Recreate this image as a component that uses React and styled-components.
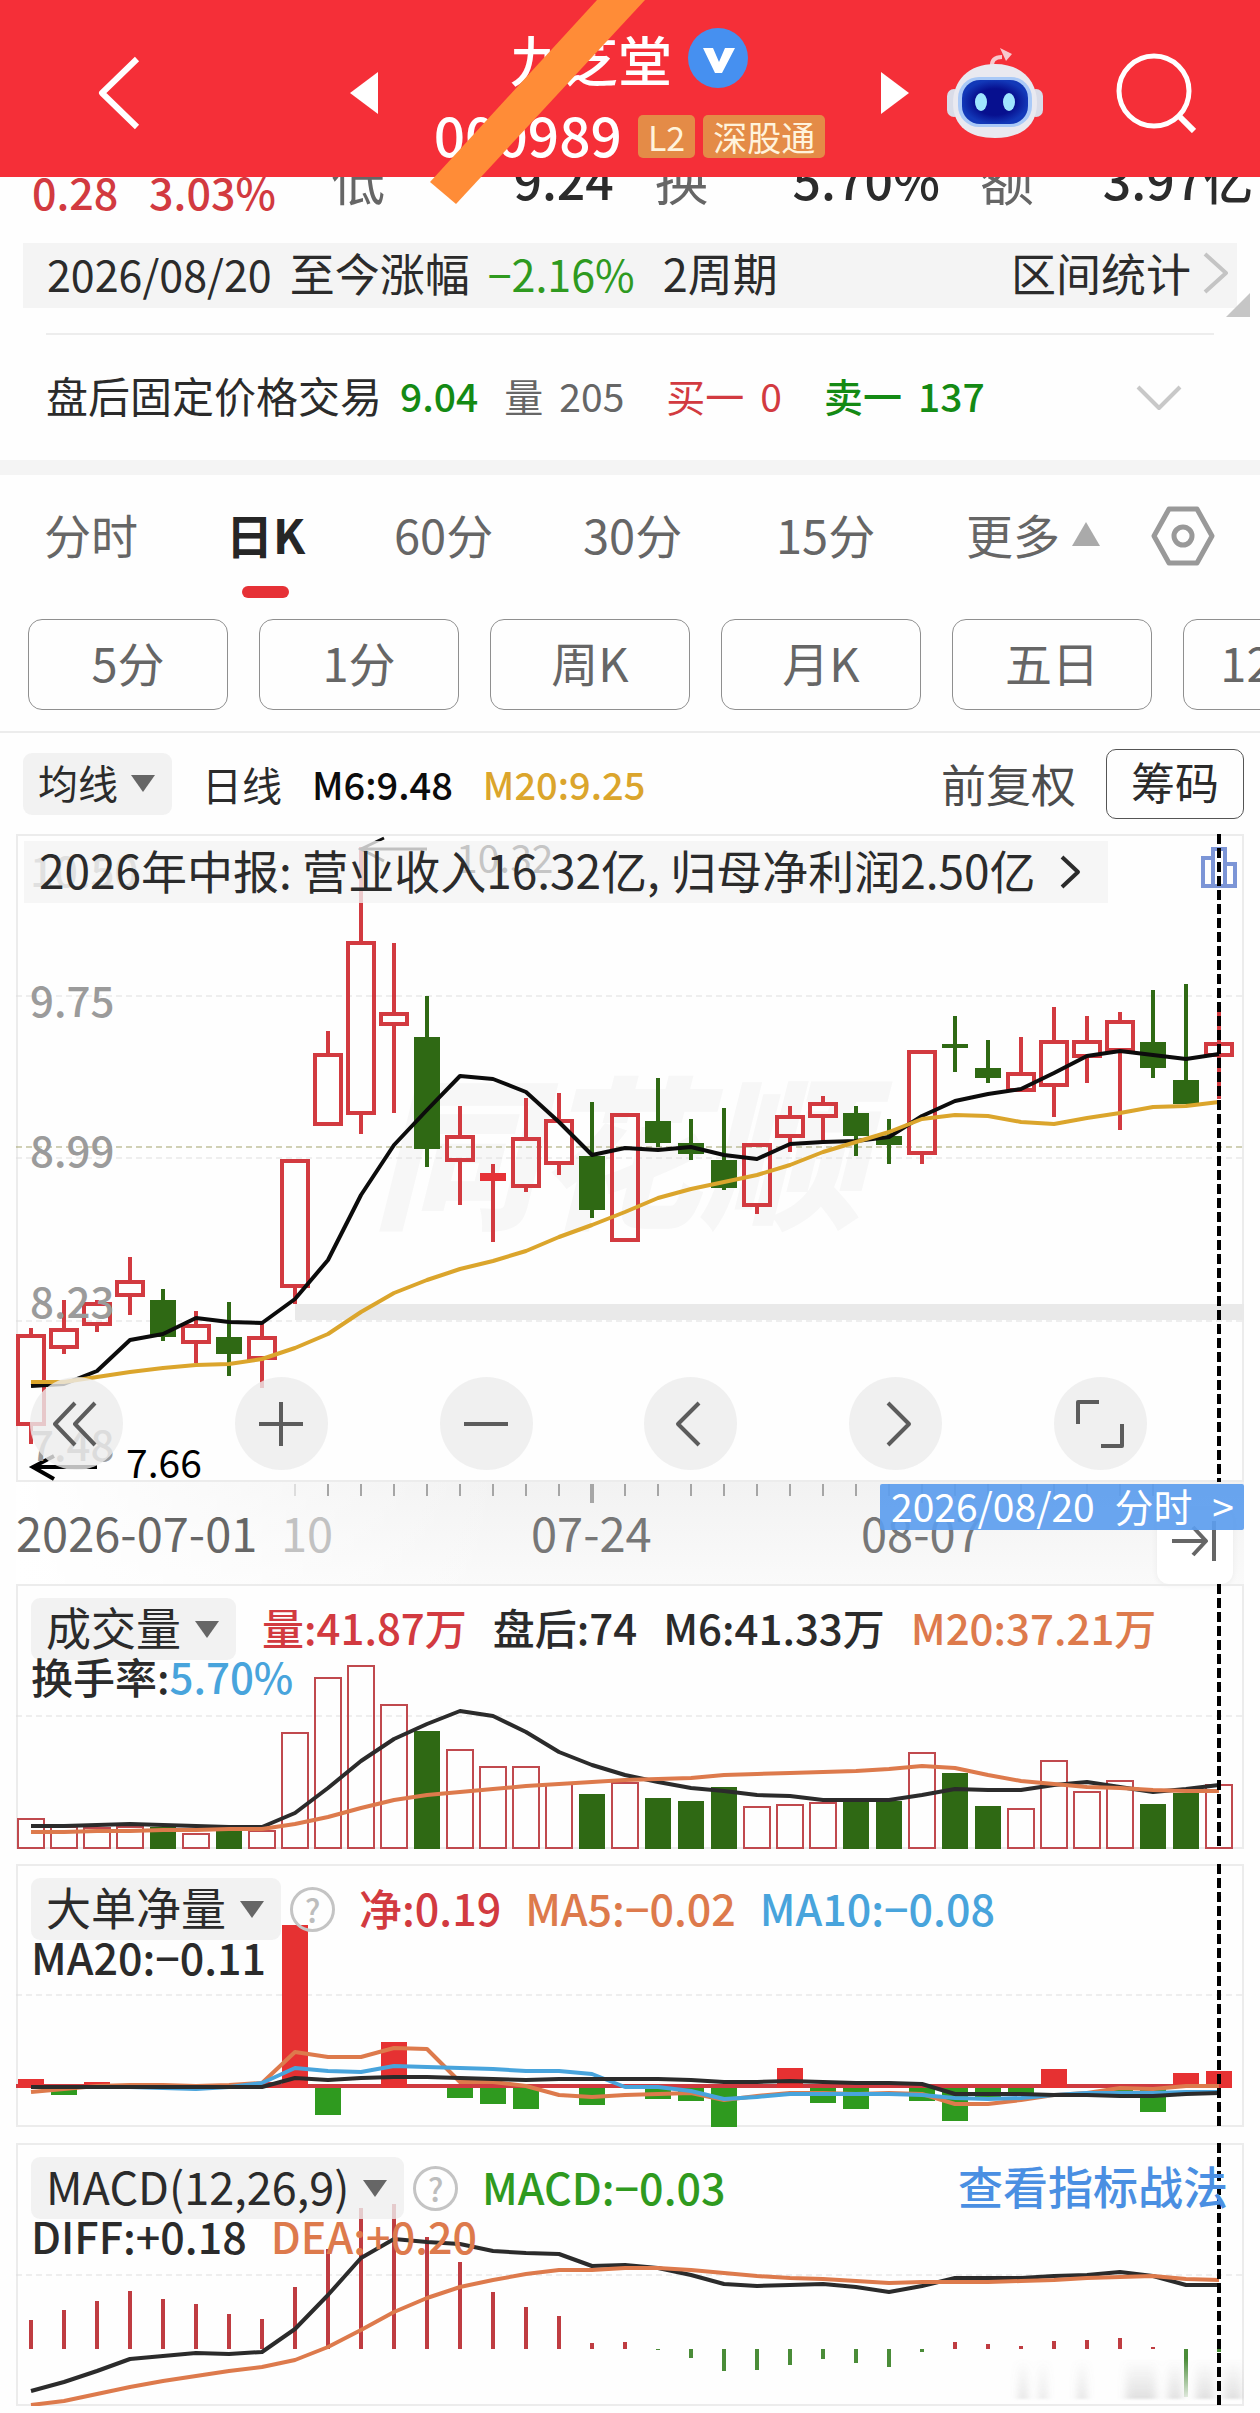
import React from 'react';
import styled, { createGlobalStyle } from 'styled-components';

const RED = '#d23a40';
const GREEN = '#2f6914';
const BRIGHT_GREEN = '#2f9a1f';
const ORANGE = '#dd7a4c';
const BLUE = '#48a4dc';
const GOLD = '#dba52c';
const INK = '#2b2b2b';

const GlobalStyle = createGlobalStyle`
  * {
    box-sizing: border-box;
  }
  body {
    margin: 0;
    background: #fefefe;
    color: ${INK};
    font-family: "Noto Sans CJK SC", "Noto Sans", sans-serif;
  }
  button, select {
    margin: 0;
    padding: 0;
    border: none;
    background: none;
    color: inherit;
    font: inherit;
    white-space: nowrap;
    cursor: pointer;
  }
  a {
    color: inherit;
    text-decoration: none;
  }
  svg {
    display: block;
  }
`;

const Page = styled.main`
  padding-bottom: 7px;
  overflow: hidden;
  white-space: nowrap;
`;

/* ---------- header ---------- */

const Header = styled.header`
  position: relative;
  z-index: 2;
  display: grid;
  grid-template-columns: 252fr 28px 503fr 65px 170px 80px;
  align-items: center;
  height: 177px;
  padding: 8px 64px 0 98px;
  background: #f52f38;
  color: #fff;
`;

const Title = styled.div`
  display: flex;
  flex-direction: column;
  align-items: center;
  align-self: start;
  margin-top: 20px;
`;

const NameRow = styled.h1`
  display: flex;
  align-items: center;
  gap: 16px;
  margin: 0;
  font-size: 54px;
  font-weight: 500;
  line-height: 60px;
`;

const CodeRow = styled.div`
  display: flex;
  align-items: center;
  gap: 8px;
  margin-top: 20px;
  font-size: 55px;
  line-height: 48px;
`;

const Code = styled.span`
  margin-right: 8px;
  padding-bottom: 6px;
  font-weight: 500;
`;

const Tag = styled.span`
  padding: 0 10px;
  border-radius: 5px;
  background: #e48b47;
  color: #fff3dc;
  font-size: 34px;
  line-height: 43px;
`;

const Slash = styled.svg`
  position: absolute;
  left: 34%;
  top: 0;
`;

/* ---------- quote rows ---------- */

const QuoteRow = styled.div`
  display: grid;
  grid-template-columns: 117fr 182fr 182fr 141fr 138fr 187fr 123fr 157fr;
  align-items: end;
  align-content: end;
  height: 66px;
  padding: 0 0 22px 32px;
  line-height: 60px;
`;

const Change = styled.span`
  color: ${RED};
  font-size: 43px;
  font-weight: 500;
`;

const QuoteLabel = styled.span`
  padding-bottom: 13px;
  color: #666;
  font-size: 54px;
`;

const QuoteValue = styled.span`
  padding-bottom: 13px;
  font-size: 50px;
  font-weight: 500;
`;

const RangeBar = styled.div`
  position: relative;
  display: flex;
  align-items: center;
  gap: 18px;
  height: 65px;
  margin: 0 23px;
  padding: 0 8px 6px 24px;
  background: #f4f4f4;
  font-size: 43px;
  line-height: 56px;
`;

const RangeName = styled.span`
  font-size: 45px;
`;

const Cycle = styled.span`
  margin-left: 10px;
  font-size: 45px;
`;

const RangeButton = styled.button`
  display: flex;
  align-items: center;
  gap: 12px;
  margin-left: auto;
  font-size: 45px;
`;

const Corner = styled.span`
  position: absolute;
  right: -13px;
  bottom: -9px;
  border-left: 24px solid transparent;
  border-bottom: 24px solid #c6c6c6;
`;

const AfterHours = styled.div`
  display: flex;
  align-items: center;
  height: 127px;
  margin: 25px 46px 0;
  padding-bottom: 6px;
  border-top: 2px solid #ededed;
  font-size: 42px;
  line-height: 56px;
`;

const Figure = styled.span`
  display: flex;
  gap: 16px;
  margin-left: ${p => p.$gap || 18}px;
  color: ${p => p.$color || 'inherit'};
  font-size: 39px;
  font-weight: ${p => p.$weight || 400};
`;

const Unfold = styled.button`
  margin: 6px 32px 0 auto;
`;

const Band = styled.div`
  height: 15px;
  background: #f4f4f4;
`;

/* ---------- period tabs ---------- */

const Tabs = styled.nav`
  display: grid;
  grid-template-columns: 182fr 168fr 189fr 193fr 190fr 185fr 109fr;
  align-items: start;
  height: 144px;
  padding: 29px 0 0 44px;
`;

const Tab = styled.button`
  display: flex;
  flex-direction: column;
  align-items: center;
  justify-self: start;
  color: ${p => (p.$active ? '#262626' : '#666')};
  font-size: 47px;
  font-weight: ${p => (p.$active ? 700 : 400)};
  line-height: 60px;
  &::after {
    content: "";
    width: 47px;
    height: 12px;
    margin-top: 22px;
    border-radius: 6px;
    background: ${p => (p.$active ? '#e63136' : 'transparent')};
  }
`;

const MoreLabel = styled.span`
  display: flex;
  align-items: center;
  gap: 12px;
`;

const Chips = styled.div`
  display: flex;
  gap: 31px;
  padding: 0 0 21px 28px;
  overflow: hidden;
  border-bottom: 2px solid #ececec;
`;

const Chip = styled.button`
  flex: 0 0 200px;
  height: 91px;
  padding-bottom: 6px;
  border: 1px solid #8f8f8f;
  border-radius: 14px;
  color: #666;
  font-size: 47px;
`;

/* ---------- chart toolbar ---------- */

const Toolbar = styled.div`
  display: flex;
  align-items: center;
  gap: 30px;
  height: 101px;
  padding: 0 16px 0 23px;
  font-size: 38px;
  font-weight: 500;
  line-height: 56px;
`;

const LineName = styled.span`
  font-size: 40px;
  font-weight: 400;
`;

const Average = styled.span`
  color: ${p => p.$color};
`;

const Adjust = styled.button`
  margin-left: auto;
  color: #4c4c4c;
  font-size: 45px;
  font-weight: 400;
`;

const ChipStats = styled.button`
  height: 70px;
  padding: 0 24px 6px;
  border: 1px solid #555;
  border-radius: 10px;
  font-size: 44px;
  font-weight: 400;
`;

const Picker = styled.label`
  position: relative;
  display: flex;
  align-items: center;
  svg {
    position: absolute;
    right: 17px;
    pointer-events: none;
  }
`;

const PickerSelect = styled.select`
  appearance: none;
  height: 62px;
  padding: 0 54px 4px 15px;
  border-radius: 9px;
  background: rgba(239, 239, 239, 0.8);
  color: ${INK};
  font-size: ${p => p.$size || 45}px;
  font-weight: 400;
`;

/* ---------- charts ---------- */

const Panel = styled.section`
  position: relative;
  margin: 0 16px ${p => p.$gap || 0}px;
  box-shadow: inset 0 0 0 2px #ececec;
`;

const Plot = styled.svg`
  position: relative;
  width: 100%;
  height: ${p => p.$height}px;
`;

const CrosshairLayer = styled.svg`
  position: absolute;
  inset: 0;
  width: 100%;
  height: ${p => p.$height}px;
  pointer-events: none;
`;

const Watermark = styled.span`
  position: absolute;
  left: 29%;
  top: 228px;
  color: #f7f7f7;
  font-size: 164px;
  font-style: italic;
  font-weight: 900;
  line-height: 166px;
`;

const PriceScale = styled.div`
  position: absolute;
  left: 14px;
  top: 9px;
  display: grid;
  grid-template-rows: 130px 150px 151px 143px 52px;
  color: #9b9b9b;
  font-size: 42px;
  font-weight: 500;
  line-height: 52px;
`;

const PeakLabel = styled.span`
  position: absolute;
  left: 440px;
  top: 0;
  color: #222;
  font-size: 39px;
  line-height: 44px;
`;

const LowLabel = styled.span`
  position: absolute;
  left: 110px;
  bottom: -1px;
  color: #000;
  font-size: 39px;
  line-height: 44px;
`;

const News = styled.a`
  position: absolute;
  left: 8px;
  top: 7px;
  display: flex;
  align-items: center;
  gap: 24px;
  height: 62px;
  padding: 0 27px 6px 15px;
  background: rgba(244, 244, 244, 0.78);
  font-size: 46px;
  svg {
    margin-top: 6px;
  }
`;

const DistributionButton = styled.button`
  position: absolute;
  right: 7px;
  top: 13px;
`;

const Controls = styled.div`
  position: absolute;
  left: 14px;
  right: 97px;
  bottom: 12px;
  display: flex;
  justify-content: space-between;
`;

const RoundButton = styled.button`
  display: grid;
  place-items: center;
  width: 93px;
  height: 93px;
  border-radius: 50%;
  background: rgba(236, 236, 236, 0.8);
`;

const Axis = styled.div`
  position: relative;
  height: 102px;
  margin: 0 16px;
  background:
    linear-gradient(90deg, #fff 0%, rgba(255, 255, 255, 0) 40%),
    linear-gradient(#f2f2f2, #fafafa);
`;

const AxisTicks = styled.svg`
  width: 100%;
  height: 24px;
`;

const Dates = styled.div`
  display: grid;
  grid-template-columns: 265fr 250fr 330fr 383fr;
  color: #777;
  font-size: 47px;
  line-height: 52px;
`;

const DateLabel = styled.time`
  color: ${p => p.$color || 'inherit'};
`;

const DateTag = styled.a`
  position: absolute;
  z-index: 1;
  right: 0;
  top: 2px;
  display: flex;
  justify-content: space-between;
  width: 364px;
  height: 46px;
  padding: 0 10px 0 11px;
  border-radius: 2px;
  background: rgba(92, 157, 238, 0.92);
  color: #fff;
  font-size: 39px;
  line-height: 42px;
`;

const JumpButton = styled.button`
  position: absolute;
  right: 11px;
  top: 28px;
  display: grid;
  place-items: center;
  width: 76px;
  height: 74px;
  padding-bottom: 12px;
  border-radius: 12px;
  background: #fff;
  box-shadow: 0 1px 6px rgba(0, 0, 0, 0.06);
`;

const Legend = styled.div`
  position: absolute;
  left: 15px;
  right: 16px;
  top: 14px;
  font-size: ${p => p.$size || 43}px;
  font-weight: 500;
`;

const LegendRow = styled.div`
  display: flex;
  align-items: center;
  gap: ${p => p.$gap || 24}px;
  line-height: 58px;
`;

const Pair = styled.div`
  display: flex;
  align-items: center;
  gap: 9px;
`;

const Reading = styled.span`
  color: ${p => p.$color || INK};
  padding-bottom: 4px;
`;

const SubRow = styled(LegendRow)`
  position: relative;
  margin-top: -10px;
  line-height: 52px;
`;

const HelpButton = styled.button`
  width: 45px;
  height: 45px;
  border: 3px solid #c4c4c4;
  border-radius: 50%;
  color: #bdbdbd;
  font-size: 32px;
  line-height: 34px;
`;

const TacticsLink = styled.a`
  margin-left: auto;
  padding-bottom: 4px;
  color: #4a8fe2;
  font-size: 45px;
`;

const STEP = 33;
const at = i => 15 + STEP * i;
const points = values => values.map((v, i) => `${at(i)},${v}`).join(' ');

// [up / down / solid, high, body top, body bottom, low]
const candles = [
  ['u', 494, 500, 592, 610], ['u', 466, 494, 515, 520], ['u', 466, 468, 492, 498],
  ['u', 423, 446, 463, 481], ['d', 455, 466, 503, 507], ['u', 477, 490, 510, 529],
  ['d', 468, 503, 520, 542], ['u', 489, 502, 526, 554], ['u', 325, 325, 454, 470],
  ['u', 197, 219, 292, 292], ['u', 13, 107, 281, 300], ['u', 109, 178, 192, 279],
  ['d', 162, 203, 315, 333], ['u', 272, 301, 328, 371], ['s', 330, 339, 347, 408],
  ['u', 264, 303, 354, 358], ['u', 259, 285, 331, 341], ['d', 268, 322, 376, 384],
  ['u', 279, 279, 408, 408], ['d', 244, 287, 309, 313], ['d', 285, 309, 320, 326],
  ['d', 274, 326, 354, 356], ['u', 309, 309, 373, 380], ['u', 272, 281, 304, 318],
  ['u', 262, 268, 284, 309], ['d', 272, 279, 302, 322], ['d', 285, 302, 311, 330],
  ['u', 216, 216, 321, 330], ['d', 182, 210, 214, 238], ['d', 206, 234, 244, 249],
  ['u', 203, 238, 258, 258], ['u', 173, 206, 253, 283], ['u', 182, 206, 224, 249],
  ['u', 178, 186, 218, 296], ['d', 156, 208, 234, 244], ['d', 150, 246, 270, 270],
  ['u', 178, 208, 223, 265],
];

const priceM6 = [
  552, 550, 537, 506, 500, 484, 488, 489, 465, 426, 361, 311, 276, 242, 245, 258, 288, 321, 314,
  316, 313, 321, 325, 310, 308, 307, 303, 282, 267, 260, 255, 239, 222, 217, 221, 225, 220,
];
const priceM20 = [
  548, 548, 543, 538, 534, 531, 530, 525, 514, 500, 478, 459, 446, 435, 427, 417, 403, 391, 378,
  364, 355, 348, 341, 331, 318, 308, 298, 285, 281, 282, 288, 290, 284, 279, 273, 272, 268,
];

const volumes = [
  234, 242, 243, 242, 243, 249, 247, 246, 148, 93, 81, 120, 147, 165, 182, 182, 199, 210, 198,
  214, 217, 203, 222, 220, 218, 217, 217, 168, 189, 222, 224, 176, 207, 196, 220, 209, 200,
];
const volumeM6 = [
  242, 242, 241, 240, 241, 242, 243, 243, 229, 204, 177, 155, 140, 127, 132, 148, 168, 181, 191,
  198, 204, 207, 211, 212, 216, 216, 216, 211, 205, 206, 206, 201, 198, 203, 208, 205, 201,
];
const volumeM20 = [
  248, 248, 247, 247, 246, 246, 245, 245, 240, 233, 224, 216, 211, 208, 205, 202, 200, 198, 196,
  195, 194, 191, 190, 189, 188, 187, 185, 182, 184, 191, 197, 200, 203, 204, 206, 207, 207,
];

const orders = [
  [0, 215], [1, 231], [2, 218], [7, 218], [8, 61], [9, 251], [11, 178], [13, 234], [14, 240],
  [15, 245], [17, 241], [19, 235], [20, 237], [21, 263], [23, 204], [24, 239], [25, 245],
  [27, 237], [28, 257], [29, 234], [30, 231], [31, 205], [33, 231], [34, 248], [35, 209], [36, 207],
];
const orderMa5 = [
  228, 225, 222, 221, 221, 222, 221, 219, 188, 193, 193, 184, 185, 218, 218, 222, 231, 233, 231,
  230, 229, 236, 232, 229, 229, 230, 229, 230, 240, 240, 236, 231, 229, 224, 225, 222, 222,
];
const orderMa10 = [
  223, 223, 223, 223, 224, 225, 223, 219, 204, 207, 208, 202, 203, 204, 205, 207, 207, 210, 223,
  223, 227, 235, 233, 230, 230, 230, 230, 231, 234, 235, 234, 231, 229, 229, 229, 228, 228,
];
const orderMa20 = [
  223, 223, 223, 223, 223, 223, 223, 223, 214, 216, 214, 213, 213, 214, 215, 216, 215, 215, 215,
  215, 216, 218, 218, 217, 218, 219, 219, 220, 230, 230, 230, 231, 231, 232, 232, 230, 229,
];

const macd = [
  177, 167, 158, 148, 156, 161, 171, 176, 144, 106, 65, 61, 94, 119, 149, 164, 173, 200, 199,
  207, 215, 228, 227, 222, 216, 220, 224, 209, 199, 201, 203, 198, 197, 195, 204, 254, 209,
];
const diff = [
  248, 239, 228, 216, 213, 210, 211, 209, 186, 152, 115, 96, 99, 101, 108, 110, 111, 123, 122,
  125, 132, 141, 143, 142, 141, 144, 149, 143, 135, 135, 135, 133, 132, 129, 133, 142, 142,
];
const dea = [
  262, 258, 251, 244, 238, 233, 228, 224, 217, 204, 187, 169, 155, 144, 137, 131, 127, 127, 125,
  125, 127, 130, 133, 135, 136, 138, 140, 139, 139, 139, 138, 137, 135, 134, 133, 136, 137,
];

const Grid = ({ y, color = '#dedede' }) => (
  <line x1="0" x2="1228" y1={y} y2={y} stroke={color} strokeWidth="1" strokeDasharray="6 4" />
);

const Crosshair = ({ height }) => (
  <line x1={at(36)} x2={at(36)} y1="0" y2={height} stroke="#000" strokeWidth="4" strokeDasharray="10 4" />
);

const Line = ({ values, color, width = 4 }) => (
  <polyline points={points(values)} fill="none" stroke={color} strokeWidth={width} strokeLinejoin="round" />
);

const Candle = ({ i, data: [kind, high, top, bottom, low] }) => {
  const x = at(i);
  const color = kind === 'd' ? GREEN : RED;
  const body = bottom - top;
  return (
    <g stroke={color}>
      <path d={`M${x} ${high}V${top}M${x} ${bottom}V${low}`} strokeWidth="4" />
      {kind === 'u'
        ? <rect x={x - 13} y={top + 2} width="26" height={body - 4} fill="none" strokeWidth="4" />
        : <rect x={x - 13} y={top} width="26" height={body} fill={kind === 's' ? '#e63136' : color} stroke="none" />}
    </g>
  );
};

const Triangle = ({ up, color = '#666' }) => (
  <svg width={up ? 28 : 24} height={up ? 24 : 17} viewBox="0 0 24 17" preserveAspectRatio="none">
    <path d={up ? 'M12 0L24 17H0Z' : 'M0 0H24L12 17Z'} fill={color} />
  </svg>
);

const Chevron = ({ d, width, height, color, stroke = 4 }) => (
  <svg width={width} height={height} viewBox={`0 0 ${width} ${height}`}>
    <path d={d} fill="none" stroke={color} strokeWidth={stroke} strokeLinejoin="round" />
  </svg>
);

const Robot = () => (
  <svg width="98" height="92" viewBox="0 0 98 92">
    <defs>
      <radialGradient id="face">
        <stop offset="0.6" stopColor="#07108f" />
        <stop offset="1" stopColor="#1238b8" />
      </radialGradient>
    </defs>
    <path d="M46 20Q45 10 56 10" fill="none" stroke="#f7c8cd" strokeWidth="4" />
    <path d="M54 1L66 7L60 14Z" fill="#f7c8cd" />
    <rect x="1" y="42" width="14" height="28" rx="7" fill="#d9dce8" />
    <rect x="83" y="42" width="14" height="28" rx="7" fill="#d9dce8" />
    <path d="M49 17C76 17 91 34 91 56C91 80 74 91 49 91S7 80 7 56C7 34 22 17 49 17Z" fill="#e9e9f0" />
    <rect x="12" y="30" width="74" height="50" rx="21" fill="#a9c9f7" />
    <rect x="16" y="33" width="66" height="44" rx="18" fill="url(#face)" />
    <ellipse cx="35" cy="55" rx="6" ry="9" fill="#9fe6ff" />
    <ellipse cx="63" cy="55" rx="6" ry="9" fill="#9fe6ff" />
  </svg>
);

const TopBar = () => (
  <Header>
    <button aria-label="返回">
      <Chevron width={42} height={74} d="M39 3L4 37L39 71" color="#fff" stroke={6} />
    </button>
    <button aria-label="上一只">
      <svg width="28" height="42"><path d="M28 0V42L0 21Z" fill="#fff" /></svg>
    </button>
    <Title>
      <NameRow>
        九芝堂
        <svg width="61" height="61" viewBox="0 0 61 61">
          <circle cx="30" cy="30" r="30" fill="#4690f0" />
          <path d="M15 20H25L31 34L37 20H47L34 45H27Z" fill="#fff" />
        </svg>
      </NameRow>
      <CodeRow>
        <Code>000989</Code>
        <Tag>L2</Tag>
        <Tag>深股通</Tag>
      </CodeRow>
    </Title>
    <button aria-label="下一只">
      <svg width="28" height="42"><path d="M0 0V42L28 21Z" fill="#fff" /></svg>
    </button>
    <button aria-label="助手"><Robot /></button>
    <button aria-label="搜索">
      <svg width="80" height="80" viewBox="0 0 80 80" fill="none" stroke="#fff" strokeWidth="5">
        <circle cx="38" cy="38" r="35" />
        <path d="M64 64L78 78" strokeWidth="6" />
      </svg>
    </button>
    <Slash width="220" height="206" viewBox="428 0 220 206">
      <path d="M597 0H645L456 204L430 182Z" fill="#ff8c37" />
    </Slash>
  </Header>
);

const Dropdown = ({ label, name, size }) => (
  <Picker>
    <PickerSelect aria-label={name} $size={size}>
      <option>{label}</option>
    </PickerSelect>
    <Triangle />
  </Picker>
);

const PriceChart = () => (
  <Panel>
    <Watermark>同花顺</Watermark>
    <Plot $height={648} viewBox="0 0 1228 648" preserveAspectRatio="none">
      <rect x="279" y="470" width="949" height="16" fill="#e9e9e9" />
      <Grid y={162} />
      <Grid y={313} color="#a3a36c" />
      <Grid y={324} />
      <Grid y={487} />
      {candles.map((c, i) => <Candle key={i} i={i} data={c} />)}
      <Line values={priceM6} color="#0c0c0c" />
      <Line values={priceM20} color={GOLD} />
      <path d="M411 15H345M368 4L345 15L368 27" fill="none" stroke="#111" strokeWidth="3" />
      <path d="M81 633H17M38 622L17 633L38 645" fill="none" stroke="#000" strokeWidth="4" />
    </Plot>
    <PriceScale>
      <span>10.50</span>
      <span>9.75</span>
      <span>8.99</span>
      <span>8.23</span>
      <span>7.48</span>
    </PriceScale>
    <PeakLabel>10.32</PeakLabel>
    <LowLabel>7.66</LowLabel>
    <News href="#news">
      2026年中报: 营业收入16.32亿, 归母净利润2.50亿
      <Chevron width={21} height={34} d="M2 2L18 17L2 32" color={INK} />
    </News>
    <DistributionButton aria-label="筹码分布">
      <svg width="36" height="42" viewBox="0 0 36 42" fill="none" stroke="#7c95d6" strokeWidth="4">
        <path d="M2 11H12V39H2ZM12 2H24V39H12ZM24 17H34V39H24Z" />
      </svg>
    </DistributionButton>
    <CrosshairLayer $height={648} viewBox="0 0 1228 648" preserveAspectRatio="none">
      <Crosshair height={648} />
    </CrosshairLayer>
    <Controls>
      <RoundButton aria-label="最早">
        <Chevron width={48} height={46} d="M22 2L2 23L22 44M42 2L22 23L42 44" color="#5c5c5c" />
      </RoundButton>
      <RoundButton aria-label="放大">
        <Chevron width={44} height={44} d="M22 0V44M0 22H44" color="#5c5c5c" />
      </RoundButton>
      <RoundButton aria-label="缩小">
        <Chevron width={44} height={44} d="M0 22H44" color="#5c5c5c" />
      </RoundButton>
      <RoundButton aria-label="向左">
        <Chevron width={32} height={46} d="M24 2L3 23L24 44" color="#5c5c5c" />
      </RoundButton>
      <RoundButton aria-label="向右">
        <Chevron width={32} height={46} d="M8 2L29 23L8 44" color="#5c5c5c" />
      </RoundButton>
      <RoundButton aria-label="全屏">
        <Chevron width={50} height={50} d="M3 25V3H24M26 47H47V25" color="#5c5c5c" />
      </RoundButton>
    </Controls>
  </Panel>
);

const TimeAxis = () => (
  <Axis>
    <AxisTicks viewBox="0 0 1228 24" preserveAspectRatio="none">
      {Array.from({ length: 27 }, (_, k) => k + 8).map(i => (
        <path
          key={i}
          d={`M${at(i)} 2V${i === 17 || i === 27 ? 21 : 14}`}
          stroke={i === 8 ? '#ddd' : '#a6a6a6'}
          strokeWidth={i === 17 ? 4 : 2}
        />
      ))}
    </AxisTicks>
    <Dates>
      <DateLabel $color="#666">2026-07-01</DateLabel>
      <DateLabel $color="#c2c2c2">10</DateLabel>
      <DateLabel>07-24</DateLabel>
      <DateLabel>08-07</DateLabel>
    </Dates>
    <JumpButton aria-label="最新">
      <Chevron width={46} height={40} d="M0 20H34M21 6L34 20L21 34M42 0V40" color="#666" />
    </JumpButton>
    <DateTag href="#minute">
      <span>2026/08/20</span>
      <span>分时</span>
      <span>&gt;</span>
    </DateTag>
  </Axis>
);

const VolumeChart = () => (
  <Panel $gap={15}>
    <Plot $height={265} viewBox="0 0 1228 265" preserveAspectRatio="none">
      <Grid y={132} />
      {volumes.map((top, i) => (candles[i][0] === 'd'
        ? <rect key={i} x={at(i) - 13} y={top} width="26" height={265 - top} fill={GREEN} />
        : <rect key={i} x={at(i) - 13} y={top + 1} width="26" height={263 - top} fill="none" stroke="#c0494e" strokeWidth="2" />))}
      <Line values={volumeM6} color={INK} width={4} />
      <Line values={volumeM20} color={ORANGE} width={4} />
      <Crosshair height={262} />
    </Plot>
    <Legend $size={42}>
      <LegendRow $gap={26}>
        <Dropdown name="成交量指标" label="成交量" />
        <Reading $color={RED}>量:41.87万</Reading>
        <Reading>盘后:74</Reading>
        <Reading>M6:41.33万</Reading>
        <Reading $color={ORANGE}>M20:37.21万</Reading>
      </LegendRow>
      <SubRow>
        <span>换手率:<Reading $color={BLUE}>5.70%</Reading></span>
      </SubRow>
    </Legend>
  </Panel>
);

const OrderChart = () => (
  <Panel $gap={16}>
    <Plot $height={263} viewBox="0 0 1228 263" preserveAspectRatio="none">
      <Grid y={131} />
      <rect x="0" y="220" width="1216" height="4" fill="#cf3a3f" />
      {orders.map(([i, y]) => (
        <rect
          key={i}
          x={at(i) - 13}
          y={Math.min(y, 224)}
          width="26"
          height={Math.abs(y - 224)}
          fill={y < 222 ? '#e63132' : BRIGHT_GREEN}
        />
      ))}
      <Line values={orderMa5} color={ORANGE} width={4} />
      <Line values={orderMa10} color={BLUE} width={4} />
      <Line values={orderMa20} color={INK} />
      <Crosshair height={263} />
    </Plot>
    <Legend>
      <LegendRow>
        <Pair>
          <Dropdown name="大单指标" label="大单净量" />
          <HelpButton aria-label="说明">?</HelpButton>
        </Pair>
        <Reading $color={RED}>净:0.19</Reading>
        <Reading $color={ORANGE}>MA5:−0.02</Reading>
        <Reading $color={BLUE}>MA10:−0.08</Reading>
      </LegendRow>
      <SubRow>
        <Reading>MA20:−0.11</Reading>
      </SubRow>
    </Legend>
  </Panel>
);

const MacdChart = () => (
  <Panel>
    <Plot $height={263} viewBox="0 0 1228 263" preserveAspectRatio="none">
      <defs>
        <linearGradient id="fade" x1="0" y1="0" x2="0" y2="1">
          <stop offset="0" stopColor="#888" stopOpacity="0" />
          <stop offset="1" stopColor="#888" stopOpacity="0.25" />
        </linearGradient>
        <linearGradient id="tail" x1="0" y1="0" x2="0" y2="1">
          <stop offset="0.2" stopColor="#4a8c38" />
          <stop offset="1" stopColor="#4a8c38" stopOpacity="0.15" />
        </linearGradient>
        <filter id="soft"><feGaussianBlur stdDeviation="4 1" /></filter>
      </defs>
      <Grid y={132} />
      {macd.map((y, i) => (
        <rect
          key={i}
          x={at(i) - 2}
          y={Math.min(y, 206)}
          width="4"
          height={Math.abs(y - 206)}
          fill={y < 206 ? '#bf3c41' : y > 240 ? 'url(#tail)' : '#4a8c38'}
        />
      ))}
      <Line values={diff} color={INK} />
      <Line values={dea} color={ORANGE} />
      <g fill="url(#fade)" filter="url(#soft)">
        <rect x="1003" y="216" width="8" height="40" />
        <rect x="1024" y="216" width="6" height="40" />
        <rect x="1062" y="216" width="8" height="40" />
        <rect x="1110" y="216" width="30" height="40" />
        <rect x="1152" y="216" width="14" height="40" />
        <rect x="1180" y="216" width="18" height="40" />
        <rect x="1208" y="216" width="18" height="40" />
      </g>
      <Crosshair height={263} />
    </Plot>
    <Legend>
      <LegendRow>
        <Pair>
          <Dropdown name="MACD指标" label="MACD(12,26,9)" />
          <HelpButton aria-label="说明">?</HelpButton>
        </Pair>
        <Reading $color={BRIGHT_GREEN}>MACD:−0.03</Reading>
        <TacticsLink href="#tactics">查看指标战法</TacticsLink>
      </LegendRow>
      <SubRow>
        <Reading>DIFF:+0.18</Reading>
        <Reading $color={ORANGE}>DEA:+0.20</Reading>
      </SubRow>
    </Legend>
  </Panel>
);

const App = () => (
  <>
    <GlobalStyle />
    <Page>
      <TopBar />
      <QuoteRow>
        <Change>0.28</Change>
        <Change>3.03%</Change>
        <QuoteLabel>低</QuoteLabel>
        <QuoteValue>9.24</QuoteValue>
        <QuoteLabel>换</QuoteLabel>
        <QuoteValue>5.70%</QuoteValue>
        <QuoteLabel>额</QuoteLabel>
        <QuoteValue>3.97亿</QuoteValue>
      </QuoteRow>
      <RangeBar>
        <span>2026/08/20</span>
        <RangeName>至今涨幅</RangeName>
        <Average $color={BRIGHT_GREEN}>−2.16%</Average>
        <Cycle>2周期</Cycle>
        <RangeButton>
          区间统计
          <Chevron width={26} height={42} d="M2 2L23 21L2 40" color="#c4c4c4" />
        </RangeButton>
        <Corner />
      </RangeBar>
      <AfterHours>
        盘后固定价格交易
        <Figure $color="#148a14" $weight={500}>9.04</Figure>
        <Figure $gap={26} $color="#666"><span>量</span><span>205</span></Figure>
        <Figure $gap={42} $color={RED}><span>买一</span><span>0</span></Figure>
        <Figure $gap={42} $color="#148a14" $weight={500}><span>卖一</span><span>137</span></Figure>
        <Unfold aria-label="展开">
          <Chevron width={46} height={26} d="M2 2L23 23L44 2" color="#c8c8c8" />
        </Unfold>
      </AfterHours>
      <Band />
      <Tabs>
        <Tab>分时</Tab>
        <Tab $active>日K</Tab>
        <Tab>60分</Tab>
        <Tab>30分</Tab>
        <Tab>15分</Tab>
        <Tab><MoreLabel>更多<Triangle up color="#aaa" /></MoreLabel></Tab>
        <button aria-label="设置">
          <svg width="64" height="64" viewBox="0 0 64 64" fill="none" stroke="#999" strokeWidth="5">
            <path d="M18 5H46L61 32L46 59H18L3 32Z" strokeLinejoin="round" />
            <circle cx="32" cy="32" r="9" />
          </svg>
        </button>
      </Tabs>
      <Chips>
        {['5分', '1分', '周K', '月K', '五日', '120分'].map(t => <Chip key={t}>{t}</Chip>)}
      </Chips>
      <Toolbar>
        <Dropdown name="主图指标" label="均线" size={40} />
        <LineName>日线</LineName>
        <Average $color="#0c0c0c">M6:9.48</Average>
        <Average $color={GOLD}>M20:9.25</Average>
        <Adjust>前复权</Adjust>
        <ChipStats>筹码</ChipStats>
      </Toolbar>
      <PriceChart />
      <TimeAxis />
      <VolumeChart />
      <OrderChart />
      <MacdChart />
    </Page>
  </>
);

export default App;
